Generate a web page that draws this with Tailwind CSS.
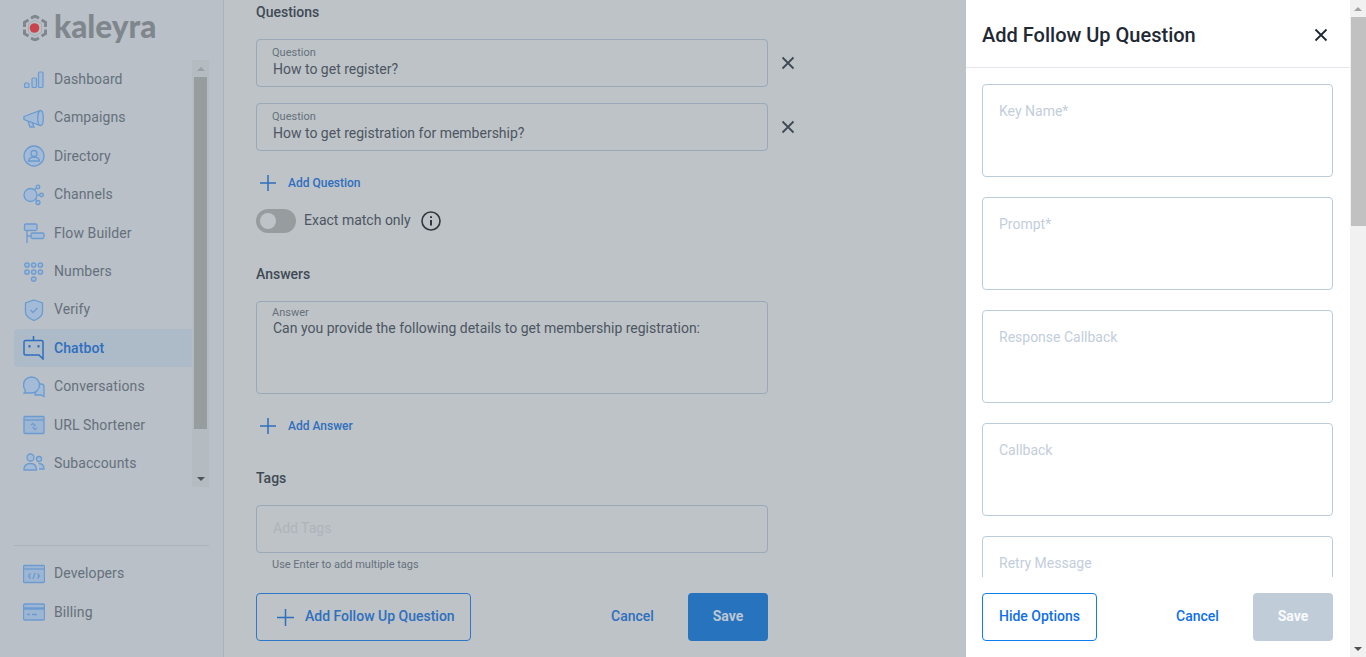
<!DOCTYPE html>
<html>
    <head>
        <title>Add Follow Up Question</title>
        <meta name="viewport" content="width=device-width, initial-scale=1">
        <script src="https://cdn.jsdelivr.net/npm/@tailwindcss/browser@4"></script>
    </head>
    <body class="flex h-screen overflow-hidden bg-[#bec3c7] font-['Roboto',sans-serif] text-[14px] text-[#3f4a55]">
        <!-- sidebar -->
        <aside class="flex flex-col w-[224px] h-full shrink-0 bg-[#b9c0c7] border-r border-[#adb3b9]">
            <div class="flex items-center h-[60px] pl-[23px] pb-[4px] gap-[7px]">
                <svg class="w-[24px] h-[26px]" viewBox="0 0 24 26">
                    <circle cx="11.500" cy="13" r="4.800" fill="#c9444c"/>
                    <path d="M8 3.200 12 1l4 2.200M18.500 5 22.500 7.300V12M22.500 14.500V18.700L18.500 21M16 23 12 25l-4-2M5.500 21 1.500 18.700V14.500M1.500 12V7.300L5.500 5" fill="none" stroke="#7f878d" stroke-width="3"/>
                    <path d="M12 5 18.500 9v8L12 21 5.500 17V9z" fill="none" stroke="#a5abb0" stroke-width="1"/>
                </svg>
                <span class="pb-[3px] font-['Lato',sans-serif] font-black text-[31.5px] leading-none text-[#7f878d]">kaleyra</span>
            </div>
            <div class="flex h-[427px] pl-[14px] pr-[14px]">
                <nav class="flex flex-col flex-1 pt-[0.3px]">
                    <a class="flex items-center h-[38.4px] shrink-0 gap-[9px] pl-[9px] tracking-[0.1px] text-[#65707c]">
                        <svg class="w-[22px] h-[22px]" viewBox="0 0 22 22" fill="#a3bbd6" stroke="#6c9bd0" stroke-width="1.200"><rect x="1.500" y="15" width="4.500" height="4.500" rx="1"/><rect x="9" y="10" width="4.500" height="9.500" rx="1"/><rect x="15.500" y="4" width="4.500" height="15.500" rx="1"/></svg>
                        Dashboard
                    </a>
                    <a class="flex items-center h-[38.4px] shrink-0 gap-[9px] pl-[9px] tracking-[0.1px] text-[#65707c]">
                        <svg class="w-[22px] h-[22px]" viewBox="0 0 22 22" fill="#a3bbd6" stroke="#6c9bd0" stroke-width="1.300"><path d="M5 14l2 6h4l-2-5" /><path d="M1 9.500 16 4v14L1 12.500z"/><ellipse cx="17.500" cy="11" rx="2.800" ry="7.500"/></svg>
                        Campaigns
                    </a>
                    <a class="flex items-center h-[38.4px] shrink-0 gap-[9px] pl-[9px] tracking-[0.1px] text-[#65707c]">
                        <svg class="w-[22px] h-[22px]" viewBox="0 0 22 22" fill="none" stroke="#6c9bd0" stroke-width="1.300"><circle cx="11" cy="11" r="10" fill="#a3bbd6"/><circle cx="11" cy="8.500" r="3"/><path d="M5.500 16c.5-3 3-4 5.500-4s5 1 5.500 4z"/></svg>
                        Directory
                    </a>
                    <a class="flex items-center h-[38.4px] shrink-0 gap-[9px] pl-[9px] tracking-[0.1px] text-[#65707c]">
                        <svg class="w-[22px] h-[22px]" viewBox="0 0 22 22" fill="#a3bbd6" stroke="#6c9bd0" stroke-width="1.300"><path d="M11 6 14 3.500M14.500 11h2.500M12.500 15l1.500 2" fill="none"/><circle cx="7.500" cy="11" r="6.500"/><circle cx="15" cy="3" r="1.800"/><circle cx="18.500" cy="11" r="1.800"/><circle cx="15" cy="18.500" r="2"/></svg>
                        Channels
                    </a>
                    <a class="flex items-center h-[38.4px] shrink-0 gap-[9px] pl-[9px] tracking-[0.1px] text-[#65707c]">
                        <svg class="w-[22px] h-[22px]" viewBox="0 0 22 22" fill="#a3bbd6" stroke="#6c9bd0" stroke-width="1.300"><path d="M4 8v13M4 14h4" fill="none"/><rect x="1.500" y="2" width="12.500" height="6.500" rx="1.500"/><rect x="8" y="11" width="13" height="5.500" rx="1.500"/></svg>
                        Flow Builder
                    </a>
                    <a class="flex items-center h-[38.4px] shrink-0 gap-[9px] pl-[9px] tracking-[0.1px] text-[#65707c]">
                        <svg class="w-[22px] h-[22px]" viewBox="0 0 22 22" fill="#a3bbd6" stroke="#6c9bd0" stroke-width="1.300"><circle cx="4" cy="5" r="2.200"/><circle cx="10.700" cy="5" r="2.200"/><circle cx="17.400" cy="5" r="2.200"/><circle cx="4" cy="12" r="2.200"/><circle cx="10.700" cy="12" r="2.200"/><circle cx="17.400" cy="12" r="2.200"/><circle cx="10.700" cy="19" r="2.200"/></svg>
                        Numbers
                    </a>
                    <a class="flex items-center h-[38.4px] shrink-0 gap-[9px] pl-[9px] tracking-[0.1px] text-[#65707c]">
                        <svg class="w-[22px] h-[22px]" viewBox="0 0 22 22" fill="#a3bbd6" stroke="#6c9bd0" stroke-width="1.300"><path d="M11 1 19.500 4v9c0 4-3.500 6.500-8.500 8.500C6 19.500 2.500 17 2.500 13V4z"/><path d="M7.500 11l2.500 2.500 4.500-4.500" fill="none"/></svg>
                        Verify
                    </a>
                    <a class="flex items-center h-[38.4px] shrink-0 gap-[9px] pl-[9px] tracking-[0.1px] rounded-l-[4px] bg-[#adbac8] font-medium text-[#2e6fbe]">
                        <svg class="w-[22px] h-[24px]" viewBox="0 0 22 24" fill="none" stroke="#2e6fbe" stroke-width="1.500"><path d="M2.500 4.500h16a1.500 1.500 0 0 1 1.500 1.500V23l-4-4H2.500A1.500 1.500 0 0 1 1 17.500V6a1.500 1.500 0 0 1 1.500-1.500z"/><path d="M10.500 4.500V0"/><path d="M6.500 9v2.500M15.500 9v2.500" stroke-width="2"/></svg>
                        Chatbot
                    </a>
                    <a class="flex items-center h-[38.4px] shrink-0 gap-[9px] pl-[9px] tracking-[0.1px] text-[#65707c]">
                        <svg class="w-[22px] h-[22px]" viewBox="0 0 22 22" fill="#a3bbd6" stroke="#6c9bd0" stroke-width="1.300"><path d="M14 8h4a3 3 0 0 1 3 3v9.500l-3-1.500H12z"/><path d="M8.500 1c4.500 0 8 3.500 8 8s-3.500 8-8 8H1l1.500-2.500C1 13 .500 11 .500 9c0-4.500 3.500-8 8-8z"/></svg>
                        Conversations
                    </a>
                    <a class="flex items-center h-[38.4px] shrink-0 gap-[9px] pl-[9px] tracking-[0.1px] text-[#65707c]">
                        <svg class="w-[22px] h-[22px]" viewBox="0 0 22 22" fill="#9cb6d3" stroke="#6c9bd0" stroke-width="1.300"><rect x="1" y="2.500" width="20" height="17" rx="1"/><path d="M1 6h20" /><path d="M8 11l2-1.500 2.500 2.500M14 14l-2 1.500-2.500-2.500" fill="none"/></svg>
                        URL Shortener
                    </a>
                    <a class="flex items-center h-[38.4px] shrink-0 gap-[9px] pl-[9px] tracking-[0.1px] text-[#65707c]">
                        <svg class="w-[22px] h-[22px]" viewBox="0 0 22 22" fill="#a3bbd6" stroke="#6c9bd0" stroke-width="1.300"><circle cx="7.500" cy="5.500" r="3.500"/><path d="M1 18c0-4.500 3-6.500 6.500-6.500s6 2 6 6.500z"/><circle cx="16" cy="7" r="2.500"/><path d="M15.500 11.500c3 0 5.500 1.500 5.500 5.500h-5"/></svg>
                        Subaccounts
                    </a>
                </nav>
                <!-- sidebar scrollbar -->
                <div class="flex flex-col items-center w-[17px] bg-[#b4bbc1]">
                    <div class="flex items-center justify-center h-[17px]"><div class="w-0 h-0 border-x-[4px] border-x-transparent border-b-[4px] border-b-[#98a0a6]"></div></div>
                    <div class="w-[13px] h-[352px] bg-[#979d9f]"></div>
                    <div class="flex-1"></div>
                    <div class="flex items-center justify-center h-[17px]"><div class="w-0 h-0 border-x-[4px] border-x-transparent border-t-[4px] border-t-[#4f5458]"></div></div>
                </div>
            </div>
            <div class="mt-[58px] mx-[14px] w-[195px] border-t border-[#adb3b9]"></div>
            <nav class="flex flex-col mt-[8.5px] pl-[14px]">
                <a class="flex items-center h-[38.4px] gap-[9px] pl-[9px] tracking-[0.1px] text-[#65707c]">
                    <svg class="w-[22px] h-[22px]" viewBox="0 0 22 22" fill="#9cb6d3" stroke="#6c9bd0" stroke-width="1.300"><rect x=".500" y="2.500" width="21" height="17" rx="1"/><path d="M.500 6h21"/><path d="M7.500 10.500 5.500 13l2 2.500M14.500 10.500l2 2.500-2 2.500M12 10l-2 6" fill="none"/></svg>
                    Developers
                </a>
                <a class="flex items-center h-[38.4px] gap-[9px] pl-[9px] tracking-[0.1px] text-[#65707c]">
                    <svg class="w-[22px] h-[22px]" viewBox="0 0 22 22" fill="#9cb6d3" stroke="#6c9bd0" stroke-width="1.300"><rect x=".500" y="3" width="21" height="16" rx="1.500"/><path d="M.500 7.500h21" stroke-width="2.500"/><path d="M4 13.500h3M9 13.500h5" fill="none"/></svg>
                    Billing
                </a>
            </nav>
        </aside>

        <!-- form -->
        <main class="w-[742px] shrink-0 pl-[32px] pt-[4px]">
            <p class="font-medium leading-[16px]">Questions</p>
            <div class="flex items-center mt-[19px]">
                <div class="flex flex-col justify-center w-[512px] h-[48px] pl-[15px] pb-[2px] rounded-[4px] border border-[#9aa8b8]">
                    <span class="text-[11px] leading-[13px] text-[#65707c]">Question</span>
                    <span class="pl-px mt-[1px] leading-[18px] text-[#4c5662]">How to get register?</span>
                </div>
                <svg class="w-[14px] h-[14px] ml-[13px]" viewBox="0 0 14 14" fill="none" stroke="#3f4a55" stroke-width="1.800"><path d="M1.500 1.500l11 11M12.500 1.500l-11 11"/></svg>
            </div>
            <div class="flex items-center mt-[16px]">
                <div class="flex flex-col justify-center w-[512px] h-[48px] pl-[15px] pb-[2px] rounded-[4px] border border-[#9aa8b8]">
                    <span class="text-[11px] leading-[13px] text-[#65707c]">Question</span>
                    <span class="pl-px mt-[1px] leading-[18px] text-[#4c5662]">How to get registration for membership?</span>
                </div>
                <svg class="w-[14px] h-[14px] ml-[13px]" viewBox="0 0 14 14" fill="none" stroke="#3f4a55" stroke-width="1.800"><path d="M1.500 1.500l11 11M12.500 1.500l-11 11"/></svg>
            </div>
            <div class="flex items-center h-[16px] mt-[24px] pl-[4px] gap-[12px] text-[12px] font-medium text-[#2e6fbe]">
                <svg class="w-[16px] h-[16px]" viewBox="0 0 16 16" fill="none" stroke="#2e6fbe" stroke-width="1.500"><path d="M8 0v16M0 8h16"/></svg>
                Add Question
            </div>
            <div class="flex items-center h-[24px] mt-[18px]">
                <div class="flex items-center w-[40px] h-[24px] pl-[4px] rounded-full bg-[#979d9f]">
                    <div class="w-[16px] h-[16px] rounded-full bg-[#bec3c7]"></div>
                </div>
                <span class="ml-[8px] pb-[1px] text-[#4c5662]">Exact match only</span>
                <svg class="w-[20px] h-[20px] ml-[10px]" viewBox="0 0 20 20" fill="none" stroke="#2f3740" stroke-width="1.600"><circle cx="10" cy="10" r="9"/><path d="M10 9v5.500" stroke-width="2"/><path d="M10 5.200v1.800" stroke-width="2"/></svg>
            </div>
            <p class="mt-[33px] font-medium leading-[16px]">Answers</p>
            <div class="w-[512px] h-[93px] mt-[19px] pl-[15px] pt-[5px] rounded-[4px] border border-[#9aa8b8]">
                <p class="text-[11px] leading-[12px] text-[#65707c]">Answer</p>
                <p class="pl-px mt-[1px] leading-[17px] text-[#4c5662]">Can you provide the following details to get membership registration:</p>
            </div>
            <div class="flex items-center h-[16px] mt-[24px] pl-[4px] gap-[12px] text-[12px] font-medium text-[#2e6fbe]">
                <svg class="w-[16px] h-[16px]" viewBox="0 0 16 16" fill="none" stroke="#2e6fbe" stroke-width="1.500"><path d="M8 0v16M0 8h16"/></svg>
                Add Answer
            </div>
            <p class="mt-[36px] font-medium leading-[16px]">Tags</p>
            <div class="flex items-center w-[512px] h-[48px] mt-[19px] pl-[16px] pb-[1px] rounded-[4px] border border-[#9aa8b8] text-[#adb4bc]">Add Tags</div>
            <p class="mt-[5px] pl-[16px] text-[11px] leading-[13px] text-[#65707c]">Use Enter to add multiple tags</p>
            <div class="flex items-center w-[512px] mt-[22px]">
                <div class="flex items-center w-[215px] h-[48px] pl-[20px] gap-[11px] rounded-[4px] border border-[#2e79c7] font-medium text-[#2e6fbe]">
                    <svg class="w-[17px] h-[17px]" viewBox="0 0 17 17" fill="none" stroke="#2e6fbe" stroke-width="1.500"><path d="M8.500 0v17M0 8.500h17"/></svg>
                    <span class="pb-[2px]">Add Follow Up Question</span>
                </div>
                <span class="ml-[140px] pb-[2px] font-medium text-[#2e6fbe]">Cancel</span>
                <div class="flex items-center justify-center w-[80px] h-[48px] ml-auto pb-[2px] rounded-[4px] bg-[#2873bd] font-bold text-[#bcc7d3]">Save</div>
            </div>
        </main>

        <!-- follow up drawer -->
        <section class="flex flex-col w-[384px] h-full shrink-0 bg-white">
            <header class="flex items-center justify-between h-[68px] shrink-0 pl-[16px] pr-[22px] pt-[3px] border-b border-[#e4e8ec]">
                <h2 class="text-[20px] font-medium text-[#1f2933]">Add Follow Up Question</h2>
                <svg class="w-[14px] h-[14px]" viewBox="0 0 14 14" fill="none" stroke="#1f2933" stroke-width="1.800"><path d="M1.500 1.500l11 11M12.500 1.500l-11 11"/></svg>
            </header>
            <div class="flex flex-col flex-1 gap-[20px] px-[16px] pr-[17px] pt-[16px] overflow-hidden">
                <div class="shrink-0 h-[93px] pl-[16px] pt-[16px] leading-[20px] rounded-[4px] border border-[#bccbdb] text-[#c3cedb]">Key Name*</div>
                <div class="shrink-0 h-[93px] pl-[16px] pt-[16px] leading-[20px] rounded-[4px] border border-[#bccbdb] text-[#c3cedb]">Prompt*</div>
                <div class="shrink-0 h-[93px] pl-[16px] pt-[16px] leading-[20px] rounded-[4px] border border-[#bccbdb] text-[#c3cedb]">Response Callback</div>
                <div class="shrink-0 h-[93px] pl-[16px] pt-[16px] leading-[20px] rounded-[4px] border border-[#bccbdb] text-[#c3cedb]">Callback</div>
                <div class="shrink-0 h-[93px] pl-[16px] pt-[16px] leading-[20px] rounded-[4px] border border-[#bccbdb] text-[#c3cedb]">Retry Message</div>
            </div>
            <div class="flex items-center h-[80px] shrink-0 pl-[16px] pr-[17px]">
                <div class="flex items-center justify-center w-[115px] h-[48px] pb-[2px] rounded-[4px] border border-[#0f7cf0] font-medium text-[#0f6fe8]">Hide Options</div>
                <span class="ml-[79px] pb-[2px] font-medium text-[#0f6fe8]">Cancel</span>
                <div class="flex items-center justify-center w-[80px] h-[48px] ml-auto pb-[2px] rounded-[4px] bg-[#c0ccd8] font-bold text-white/90">Save</div>
            </div>
        </section>

        <!-- page scrollbar -->
        <div class="flex flex-col items-center w-[16px] h-full shrink-0 bg-[#f1f1f1]">
            <div class="flex items-center justify-center h-[17px]"><div class="w-0 h-0 border-x-[4px] border-x-transparent border-b-[4px] border-b-[#a3a3a3]"></div></div>
            <div class="w-[15px] h-[209px] bg-[#c1c1c1]"></div>
            <div class="flex-1"></div>
            <div class="flex items-center justify-center h-[17px]"><div class="w-0 h-0 border-x-[4px] border-x-transparent border-t-[4px] border-t-[#505050]"></div></div>
        </div>
    </body>
</html>
